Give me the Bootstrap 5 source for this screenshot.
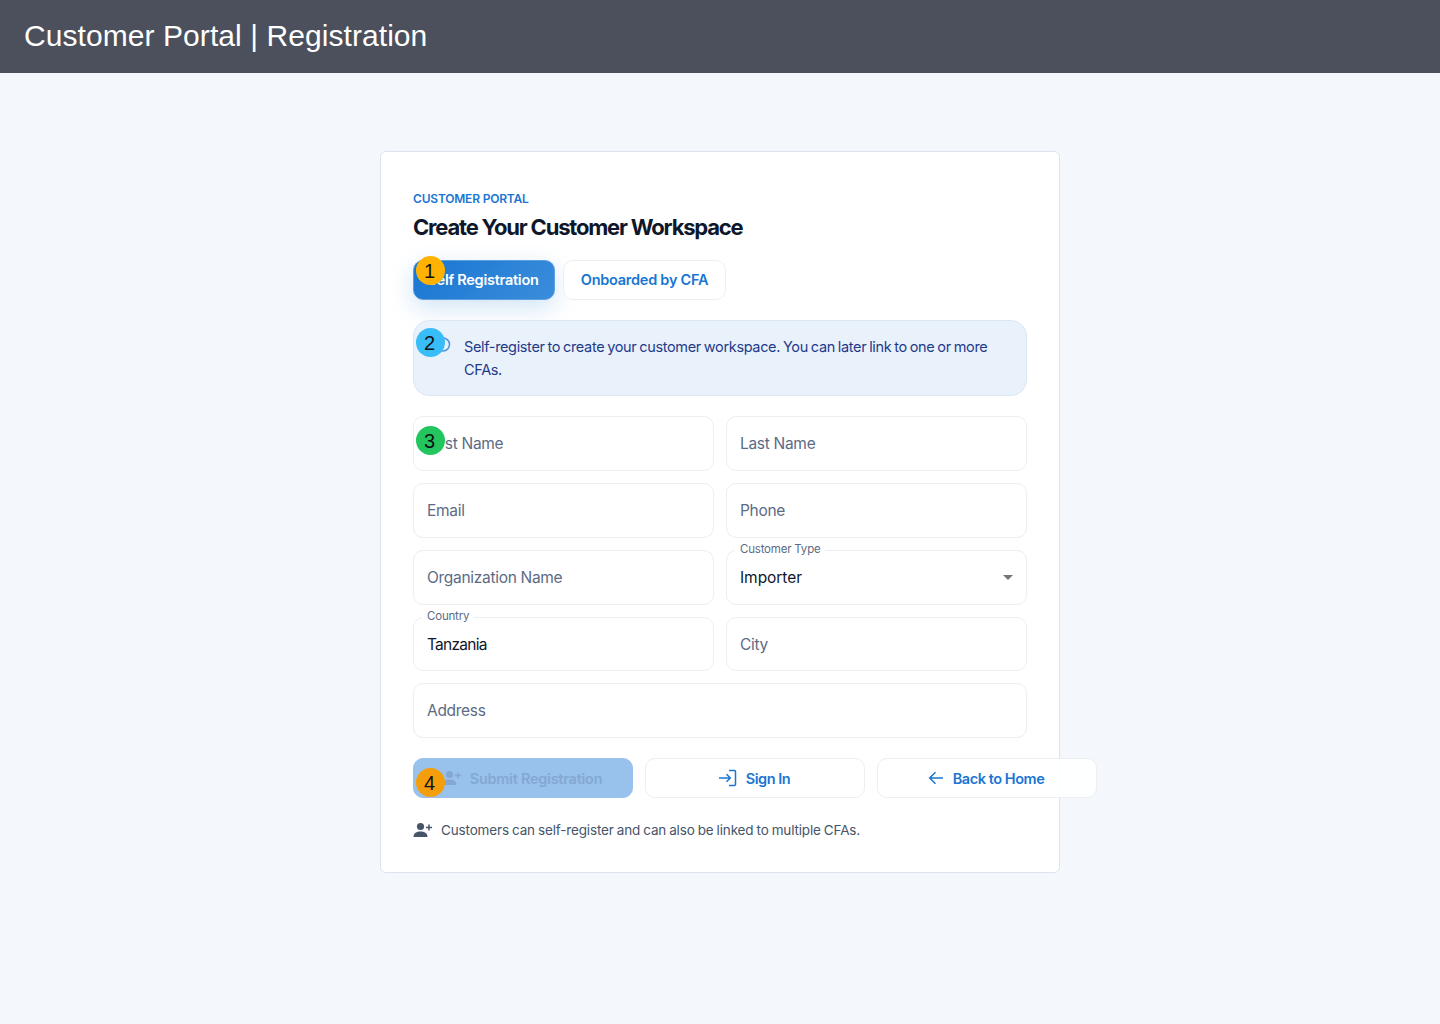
<!DOCTYPE html>
<html lang="en">
<head>
    <meta charset="UTF-8">
    <title>Customer Portal | Registration</title>
    <link href="https://cdn.jsdelivr.net/npm/bootstrap@5.3.0/dist/css/bootstrap.min.css" rel="stylesheet">
    <style>
        body {
            background: #f4f7fc;
            font-family: Inter, "Noto Sans", sans-serif;
            min-height: 1024px;
            color: #0f172a;
        }
        .portal-top {
            height: 73px;
            background: #4b505c;
            color: #fff;
            padding-left: 24px;
            font: 30px/71px "Liberation Sans", Arial, sans-serif;
            letter-spacing: .07px;
        }
        .reg-panel {
            width: 680px;
            height: 722px;
            margin: 78px auto 0;
            background: #fff;
            border: 1px solid #dbe3ee;
            border-radius: 6px;
            padding: 40px 32px 0;
        }
        .eyebrow {
            color: #1976d2;
            font-size: 12px;
            font-weight: 600;
            line-height: 14px;
            letter-spacing: -.2px;
        }
        .reg-title {
            font-size: 22px;
            font-weight: 700;
            line-height: 28px;
            letter-spacing: -1.2px;
            margin: 7px 0 18.6px;
            color: #0f172a;
        }
        .tab-btn {
            height: 40px;
            border-radius: 10px;
            font-size: 14.5px;
            font-weight: 600;
            letter-spacing: -0.25px;
            padding: 0;
            border: 1px solid #eceef2;
            background: #fff;
            color: #1976d2;
        }
        .tab-self {
            width: 142px;
            background: linear-gradient(135deg, #1976d2, #3b8ddb);
            border-color: #5a9fe0;
            color: #fff;
            padding-right: 2px;
            box-shadow: 0 8px 24px rgba(25, 118, 210, .2);
        }
        .tab-self:hover { background: linear-gradient(135deg, #1976d2, #3b8ddb); color: #fff; }
        .tab-cfa { width: 163px; }
        .info-note {
            height: 76px;
            margin: 20px 0 20.7px;
            padding: 14.4px 16px 0 50px;
            background: #e9f1fb;
            border: 1px solid #dce7f5;
            border-radius: 16px;
            color: #1e3a8a;
            font-size: 14.5px;
            line-height: 23px;
            letter-spacing: -0.35px;
            word-spacing: -.8px;
            position: relative;
        }
        .info-ring {
            position: absolute;
            left: 22px;
            top: 15px;
            width: 15px;
            height: 17px;
        }
        .field-grid {
            display: grid;
            grid-template-columns: 1fr 1fr;
            gap: 12px;
        }
        .field-wrap { position: relative; }
        .field-wide { grid-column: span 2; }
        .reg-input {
            height: 54.75px;
            border: 1px solid #eceef1;
            border-radius: 10px;
            padding: 0 13px;
            font-size: 15.5px;
            letter-spacing: -0.3px;
            color: #0f172a;
        }
        .reg-input::placeholder { color: #5c6b85; opacity: 1; }
        .reg-filled { letter-spacing: -.75px; }
        .reg-low { padding-top: 1px; }
        .reg-select {
            background-image: none;
            letter-spacing: -.05px;
        }
        .select-caret {
            position: absolute;
            right: 14px;
            top: 25px;
            width: 0;
            height: 0;
            border-left: 5px solid transparent;
            border-right: 5px solid transparent;
            border-top: 5px solid #757575;
        }
        .field-legend {
            position: absolute;
            left: 9px;
            top: -8px;
            padding: 0 5px;
            background: #fff;
            color: #5c6b85;
            font-size: 11.5px;
            line-height: 15px;
            letter-spacing: -0.2px;
            z-index: 2;
        }
        .action-row {
            display: flex;
            gap: 12px;
            margin-top: 20px;
        }
        .act-btn {
            flex: 0 0 220px;
            height: 40px;
            border-radius: 10px;
            border: 1px solid #eceef2;
            background: rgba(255, 255, 255, .9);
            color: #1976d2;
            font-size: 14.5px;
            font-weight: 600;
            letter-spacing: -0.45px;
            padding: 1px 2px 0 0;
            display: flex;
            align-items: center;
            justify-content: center;
            gap: 9px;
        }
        .act-btn svg { margin-top: -2px; }
        .act-btn:hover { background: #fff; color: #1976d2; border-color: #eceef2; }
        .act-submit, .act-submit:disabled {
            background: #98c1ec;
            border-color: #98c1ec;
            color: #84a8d2;
            opacity: 1;
            gap: 8px;
            letter-spacing: -.25px;
        }
        .hint-line {
            display: flex;
            align-items: center;
            gap: 8px;
            margin-top: 21px;
            color: #475569;
            font-size: 13.5px;
            line-height: 22px;
            letter-spacing: -0.15px;
            word-spacing: -.6px;
        }
        .step-dot {
            position: absolute;
            left: 416px;
            width: 29px;
            height: 29px;
            border-radius: 50%;
            color: #111;
            font: 20px/30px "Liberation Sans", Arial, sans-serif;
            text-align: center;
            padding-right: 2px;
            z-index: 5;
        }
    </style>
</head>
<body>
<div class="portal-top">Customer Portal | Registration</div>

<div class="reg-panel">
    <div class="eyebrow">CUSTOMER PORTAL</div>
    <h1 class="reg-title">Create Your Customer Workspace</h1>

    <div class="d-flex gap-2">
        <button type="button" class="btn tab-btn tab-self">Self Registration</button>
        <button type="button" class="btn tab-btn tab-cfa">Onboarded by CFA</button>
    </div>

    <div class="info-note">
        <svg class="info-ring" viewBox="0 0 15 17" fill="none"><circle cx="7" cy="8.5" r="6.5" stroke="#4f94dc" stroke-width="1.6"/></svg>
        Self-register to create your customer workspace. You can later link to one or more CFAs.
    </div>

    <div class="field-grid">
        <div class="field-wrap"><input class="form-control reg-input" placeholder="First Name"></div>
        <div class="field-wrap"><input class="form-control reg-input" placeholder="Last Name"></div>
        <div class="field-wrap"><input class="form-control reg-input" placeholder="Email"></div>
        <div class="field-wrap"><input class="form-control reg-input" placeholder="Phone"></div>
        <div class="field-wrap"><input class="form-control reg-input" placeholder="Organization Name"></div>
        <div class="field-wrap">
            <span class="field-legend">Customer Type</span>
            <select class="form-select reg-input reg-select"><option>Importer</option></select>
            <span class="select-caret"></span>
        </div>
        <div class="field-wrap">
            <span class="field-legend">Country</span>
            <input class="form-control reg-input reg-filled reg-low" value="Tanzania">
        </div>
        <div class="field-wrap"><input class="form-control reg-input reg-low" placeholder="City"></div>
        <div class="field-wrap field-wide"><input class="form-control reg-input" placeholder="Address"></div>
    </div>

    <div class="action-row">
        <button type="button" class="btn act-btn act-submit" disabled>
            <svg width="20" height="16" viewBox="0 0 20 16" fill="currentColor"><circle cx="7.5" cy="4.5" r="3.6"/><path d="M0.5 15c0-3.6 3.2-5.4 7-5.4s7 1.8 7 5.4z"/><path d="M15.2 2.5h1.5v2.3H19v1.5h-2.3v2.3h-1.5V6.3h-2.3V4.8h2.3z"/></svg>
            Submit Registration
        </button>
        <button type="button" class="btn act-btn">
            <svg width="19" height="18" viewBox="0 0 19 18" fill="none" stroke="currentColor" stroke-width="1.5"><path d="M11 1.5h5.5a1 1 0 0 1 1 1v13a1 1 0 0 1-1 1H11"/><path d="M1 9h11M8.5 5.2 12.3 9l-3.8 3.8"/></svg>
            Sign In
        </button>
        <button type="button" class="btn act-btn">
            <svg width="16" height="14" viewBox="0 0 16 14" fill="none" stroke="currentColor" stroke-width="1.5"><path d="M15 7H2M7.5 1.2 1.7 7l5.8 5.8"/></svg>
            Back to Home
        </button>
    </div>

    <div class="hint-line">
        <svg width="20" height="16" viewBox="0 0 20 16" fill="#475569"><circle cx="7.5" cy="4.5" r="3.6"/><path d="M0.5 15c0-3.6 3.2-5.4 7-5.4s7 1.8 7 5.4z"/><path d="M15.2 2.5h1.5v2.3H19v1.5h-2.3v2.3h-1.5V6.3h-2.3V4.8h2.3z"/></svg>
        Customers can self-register and can also be linked to multiple CFAs.
    </div>
</div>

<div class="step-dot" style="top:256px;background:#ffb300">1</div>
<div class="step-dot" style="top:328px;background:#38bdf8">2</div>
<div class="step-dot" style="top:426px;background:#22c55e">3</div>
<div class="step-dot" style="top:768px;background:#f59e0b">4</div>
</body>
</html>
